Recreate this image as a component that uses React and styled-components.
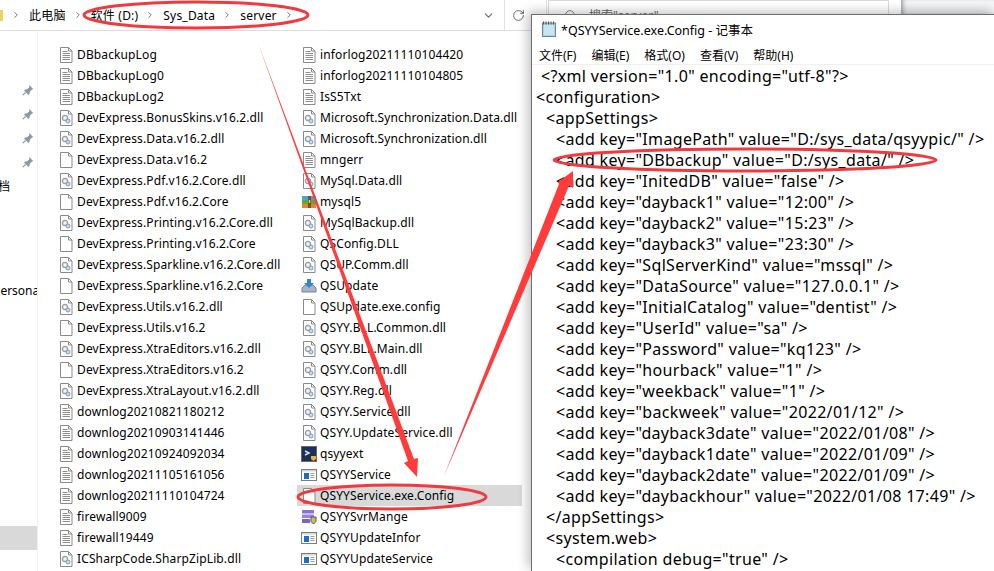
import React from "react";
import styled, { createGlobalStyle } from "styled-components";
import { ChevronRight, ChevronDown, RotateCw, Search } from "lucide-react";

const UI_FONT = `"Noto Sans", "Noto Sans CJK SC", sans-serif`;

const column1 = [
  ["DBbackupLog", "txt"],
  ["DBbackupLog0", "txt"],
  ["DBbackupLog2", "txt"],
  ["DevExpress.BonusSkins.v16.2.dll", "dll"],
  ["DevExpress.Data.v16.2.dll", "dll"],
  ["DevExpress.Data.v16.2", "blank"],
  ["DevExpress.Pdf.v16.2.Core.dll", "dll"],
  ["DevExpress.Pdf.v16.2.Core", "blank"],
  ["DevExpress.Printing.v16.2.Core.dll", "dll"],
  ["DevExpress.Printing.v16.2.Core", "blank"],
  ["DevExpress.Sparkline.v16.2.Core.dll", "dll"],
  ["DevExpress.Sparkline.v16.2.Core", "blank"],
  ["DevExpress.Utils.v16.2.dll", "dll"],
  ["DevExpress.Utils.v16.2", "blank"],
  ["DevExpress.XtraEditors.v16.2.dll", "dll"],
  ["DevExpress.XtraEditors.v16.2", "blank"],
  ["DevExpress.XtraLayout.v16.2.dll", "dll"],
  ["downlog20210821180212", "txt"],
  ["downlog20210903141446", "txt"],
  ["downlog20210924092034", "txt"],
  ["downlog20211105161056", "txt"],
  ["downlog20211110104724", "txt"],
  ["firewall9009", "txt"],
  ["firewall19449", "txt"],
  ["ICSharpCode.SharpZipLib.dll", "dll"],
];

const column2 = [
  ["inforlog20211110104420", "txt"],
  ["inforlog20211110104805", "txt"],
  ["IsS5Txt", "txt"],
  ["Microsoft.Synchronization.Data.dll", "dll"],
  ["Microsoft.Synchronization.dll", "dll"],
  ["mngerr", "txt"],
  ["MySql.Data.dll", "dll"],
  ["mysql5", "rar"],
  ["MySqlBackup.dll", "dll"],
  ["QSConfig.DLL", "dll"],
  ["QSUP.Comm.dll", "dll"],
  ["QSUpdate", "setup"],
  ["QSUpdate.exe.config", "blank"],
  ["QSYY.BLL.Common.dll", "dll"],
  ["QSYY.BLL.Main.dll", "dll"],
  ["QSYY.Comm.dll", "dll"],
  ["QSYY.Reg.dll", "dll"],
  ["QSYY.Service.dll", "dll"],
  ["QSYY.UpdateService.dll", "dll"],
  ["qsyyext", "ext"],
  ["QSYYService", "exe"],
  ["QSYYService.exe.Config", "blank", true],
  ["QSYYSvrMange", "mange"],
  ["QSYYUpdateInfor", "exe"],
  ["QSYYUpdateService", "exe"],
];

// indent is the left padding of the line in the notepad, it is not regular in the file
const configLines = [
  [9, `<?xml version="1.0" encoding="utf-8"?>`],
  [4, `<configuration>`],
  [14, `<appSettings>`],
  [24, `<add key="ImagePath" value="D:/sys_data/qsyypic/" />`],
  [24, `<add key="DBbackup" value="D:/sys_data/" />`],
  [24, `<add key="InitedDB" value="false" />`],
  [24, `<add key="dayback1" value="12:00" />`],
  [24, `<add key="dayback2" value="15:23" />`],
  [24, `<add key="dayback3" value="23:30" />`],
  [24, `<add key="SqlServerKind" value="mssql" />`],
  [24, `<add key="DataSource" value="127.0.0.1" />`],
  [24, `<add key="InitialCatalog" value="dentist" />`],
  [24, `<add key="UserId" value="sa" />`],
  [24, `<add key="Password" value="kq123" />`],
  [24, `<add key="hourback" value="1" />`],
  [24, `<add key="weekback" value="1" />`],
  [24, `<add key="backweek" value="2022/01/12" />`],
  [24, `<add key="dayback3date" value="2022/01/08" />`],
  [24, `<add key="dayback1date" value="2022/01/09" />`],
  [24, `<add key="dayback2date" value="2022/01/09" />`],
  [24, `<add key="daybackhour" value="2022/01/08 17:49" />`],
  [14, `</appSettings>`],
  [14, `<system.web>`],
  [24, `<compilation debug="true" />`],
];

const GlobalStyle = createGlobalStyle`
  html, body {
    margin: 0;
    padding: 0;
    background: #fff;
  }
`;

const Screen = styled.div`
  position: relative;
  display: flex;
  width: 994px;
  height: 571px;
  overflow: hidden;
  font-family: ${UI_FONT};
  color: #000;
  background: #fff;
`;

const Explorer = styled.div`
  flex: 0 0 901px;
  display: flex;
  flex-direction: column;
  background: #fff;
`;

const BackWindow = styled.div`
  flex: 1;
  height: 14px;
  background: linear-gradient(#f7f8f9, #e8eaec);
  box-shadow: inset 4px 0 4px -2px rgba(0, 0, 0, 0.35);
`;

const AddressBar = styled.div`
  flex: 0 0 31px;
  display: flex;
  align-items: flex-start;
  box-sizing: border-box;
  background: #fff;
  border-bottom: 1px solid #dcdcdc;
`;

const Crumbs = styled.div`
  flex: 0 0 505px;
  height: 30px;
  box-sizing: border-box;
  display: flex;
  align-items: center;
  border-right: 1px solid #e2e2e2;
  font-size: 12px;
`;

const FolderSliver = styled.span`
  width: 3px;
  height: 11px;
  background: #f2cf6b;
  margin-right: 8px;
`;

const Crumb = styled.span`
  margin: 0 7px 0 8px;
  white-space: nowrap;
  letter-spacing: 0.2px;
`;

const CrumbArrow = styled(ChevronRight)`
  width: 10px;
  height: 10px;
  color: #777;
  stroke-width: 2.4;
  flex: none;
`;

const DropArrow = styled(ChevronDown)`
  width: 13px;
  height: 13px;
  color: #666;
  margin-left: auto;
  margin-right: 9px;
  stroke-width: 2;
`;

const RefreshCell = styled.div`
  flex: 0 0 42px;
  height: 30px;
  display: flex;
  align-items: center;
  padding-left: 7px;
  box-sizing: border-box;
  border-right: 1px solid #e2e2e2;
  color: #666;
`;

const SearchBox = styled.div`
  flex: 0 0 341px;
  height: 30px;
  box-sizing: border-box;
  margin-left: 1px;
  display: flex;
  align-items: center;
  gap: 12px;
  padding-left: 15px;
  overflow: hidden;
  border: 1px solid #d9d9d9;
  font-size: 12px;
  color: #666;
`;

const Body = styled.div`
  flex: 1;
  display: flex;
  min-height: 0;
`;

const NavPane = styled.div`
  flex: 0 0 38px;
  box-sizing: border-box;
  padding-top: 47px;
  overflow: hidden;
  border-right: 1px solid #efefef;
  font-size: 12px;
`;

const NavRow = styled.div`
  height: 24px;
  display: flex;
  align-items: center;
  justify-content: ${(p) => (p.$pin ? "flex-end" : "flex-start")};
  padding-right: ${(p) => (p.$pin ? "3px" : "0")};
  margin-top: ${(p) => p.$gap || 0}px;
  background: ${(p) => (p.$selected ? "#d9d9d9" : "transparent")};
  white-space: nowrap;
  overflow: hidden;
`;

const NavText = styled.span`
  margin-left: ${(p) => p.$shift || 0}px;
`;

const FileGrid = styled.div`
  flex: 1;
  display: grid;
  grid-auto-flow: column;
  grid-template-rows: repeat(25, 21px);
  grid-template-columns: 243px 225px;
  justify-content: start;
  align-content: start;
  padding: 13px 0 0 16px;
`;

const FileRow = styled.div`
  display: flex;
  align-items: center;
  gap: 3px;
  font-size: 12px;
  line-height: 21px;
  letter-spacing: 0.12px;
  white-space: nowrap;
  background: ${(p) => (p.$selected ? "#d9d9d9" : "transparent")};
`;

const IconSlot = styled.svg`
  flex: none;
  width: 16px;
  height: 16px;
  margin-left: 4px;
`;

const Notepad = styled.div`
  position: absolute;
  left: 531px;
  top: 14px;
  right: 0;
  bottom: 0;
  display: flex;
  flex-direction: column;
  background: #fff;
  border-left: 1px solid #6d6d6d;
  border-top: 1px solid #6d6d6d;
  box-shadow: -4px -3px 10px rgba(0, 0, 0, 0.22);
`;

const TitleBar = styled.div`
  flex: 0 0 30px;
  display: flex;
  align-items: center;
  gap: 4px;
  padding: 0 0 2px 9px;
  box-sizing: border-box;
  font-size: 12.5px;
`;

const MenuBar = styled.div`
  flex: 0 0 19px;
  display: flex;
  align-items: center;
  gap: 15px;
  padding-left: 7px;
  font-size: 12px;
  border-bottom: 1px solid #f0f0f0;
`;

const TextArea = styled.div`
  flex: 1;
  padding-top: 1px;
  font-size: 16px;
  letter-spacing: 0.33px;
`;

const ConfigLine = styled.div`
  height: 21px;
  line-height: 21px;
  white-space: pre;
  padding-left: ${(p) => p.$indent}px;
`;

const Overlay = styled.svg`
  position: absolute;
  left: 0;
  top: 0;
  width: 994px;
  height: 571px;
  pointer-events: none;
`;

const DocOutline = () => (
  <path d="M2.5 .5h8l3.5 3.5v11.5h-11.5z M10.5 .5v3.5h3.5" fill="#fff" stroke="#8a8a8a" />
);

const FileIcon = ({ kind }) => {
  if (kind === "txt") {
    return (
      <IconSlot viewBox="0 0 16 16">
        <DocOutline />
        <path d="M4.5 4.5h5 M4.5 6.5h7.5 M4.5 8.5h7.5 M4.5 10.5h7.5 M4.5 12.5h7.5" stroke="#8d8d8d" />
      </IconSlot>
    );
  }
  if (kind === "dll") {
    return (
      <IconSlot viewBox="0 0 16 16">
        <DocOutline />
        <circle cx="7" cy="8" r="2.8" fill="#d4d8dc" stroke="#8f9499" />
        <circle cx="7" cy="8" r="1" fill="#fff" />
        <circle cx="10" cy="11" r="2" fill="#c3dcf0" stroke="#7d9db8" />
      </IconSlot>
    );
  }
  if (kind === "exe") {
    return (
      <IconSlot viewBox="0 0 16 16">
        <rect x=".5" y="2.5" width="15" height="11" fill="#fff" stroke="#7c7c7c" />
        <rect x="1" y="3" width="14" height="1.5" fill="#cfd6de" />
        <rect x="3" y="6" width="5" height="6" fill="#1a6fc4" />
        <path d="M9.5 6.5h4 M9.5 8.5h4 M9.5 10.5h4" stroke="#9a9a9a" />
      </IconSlot>
    );
  }
  if (kind === "rar") {
    return (
      <IconSlot viewBox="0 0 16 16">
        <rect x="1" y="2" width="14" height="4" fill="#4f9fd8" />
        <rect x="1" y="6" width="14" height="4" fill="#5da83f" />
        <rect x="1" y="10" width="14" height="4" fill="#e0862d" />
        <rect x="7" y="2" width="3" height="12" fill="#7a4f25" />
        <rect x="7.8" y="6" width="1.4" height="3" fill="#f0d080" />
      </IconSlot>
    );
  }
  if (kind === "setup") {
    return (
      <IconSlot viewBox="0 0 16 16">
        <path d="M1 10l3-3h8l3 3v4H1z" fill="#a9b4c4" stroke="#77859a" />
        <path d="M6 1h4v4h3l-5 5-5-5h3z" fill="#2f86d6" />
      </IconSlot>
    );
  }
  if (kind === "ext") {
    return (
      <IconSlot viewBox="0 0 16 16">
        <rect x=".5" y=".5" width="15" height="15" fill="#1d2f5c" stroke="#6a6a6a" />
        <path d="M4 5l4 2-4 2" fill="none" stroke="#d9e4f2" strokeWidth="1.5" />
        <path d="M10 10h5v3l-2.5 2-2.5-2z" fill="#f0b429" />
      </IconSlot>
    );
  }
  if (kind === "mange") {
    return (
      <IconSlot viewBox="0 0 16 16">
        <rect x="1" y="1" width="12" height="3.5" rx=".5" fill="#8c6fd8" />
        <rect x="1" y="5.5" width="12" height="3.5" rx=".5" fill="#9a82e0" />
        <rect x="1" y="10" width="8" height="4" rx=".5" fill="#7d63c8" />
        <path d="M10 8h5v4.5l-2.5 2.5-2.5-2.5z" fill="#f0b429" stroke="#1f5fb4" />
      </IconSlot>
    );
  }
  return (
    <IconSlot viewBox="0 0 16 16">
      <DocOutline />
    </IconSlot>
  );
};

const PinIcon = () => (
  <svg width="12" height="12" viewBox="0 0 12 12">
    <path d="M7 .8l4.2 4.2-1.2.6-2.2 2.2-.3 2.2-1.100 1-4.400-4.400 1-1.100 2.200-.3 2.200-2.200z" fill="#8c98a3" />
    <path d="M3.5 8.500L.8 11.200" stroke="#8c98a3" strokeWidth="1.200" />
  </svg>
);

const NotepadIcon = () => (
  <svg width="16" height="16" viewBox="0 0 16 16">
    <rect x="1.5" y="2" width="13" height="13.5" fill="#a8d4e6" stroke="#6f8794" />
    <rect x="3" y="4" width="10" height="10" fill="#c9e6f0" />
    <path d="M2.5 .5v3 M5 .5v3 M7.5 .5v3 M10 .5v3 M12.5 .5v3" stroke="#555" />
  </svg>
);

const App = () => (
  <Screen>
    <GlobalStyle />
    <Explorer>
      <AddressBar>
        <Crumbs>
          <FolderSliver />
          <CrumbArrow />
          <Crumb>此电脑</Crumb>
          <CrumbArrow />
          <Crumb>软件 (D:)</Crumb>
          <CrumbArrow />
          <Crumb>Sys_Data</Crumb>
          <CrumbArrow />
          <Crumb>server</Crumb>
          <CrumbArrow />
          <DropArrow />
        </Crumbs>
        <RefreshCell>
          <RotateCw size={13} strokeWidth={1.8} />
        </RefreshCell>
        <SearchBox>
          <Search size={13} strokeWidth={1.5} />
          <span>搜索"server"</span>
        </SearchBox>
      </AddressBar>
      <Body>
        <NavPane>
          <NavRow $pin><PinIcon /></NavRow>
          <NavRow $pin><PinIcon /></NavRow>
          <NavRow $pin><PinIcon /></NavRow>
          <NavRow $pin><PinIcon /></NavRow>
          <NavRow><NavText $shift={-2}>档</NavText></NavRow>
          <NavRow $gap={80}><NavText $shift={-7}>personal</NavText></NavRow>
          <NavRow $gap={224} $selected />
        </NavPane>
        <FileGrid>
          {column1.map(([name, kind]) => (
            <FileRow key={name}>
              <FileIcon kind={kind} />
              {name}
            </FileRow>
          ))}
          {column2.map(([name, kind, selected]) => (
            <FileRow key={name} $selected={selected}>
              <FileIcon kind={kind} />
              {name}
            </FileRow>
          ))}
        </FileGrid>
      </Body>
    </Explorer>
    <BackWindow />
    <Notepad>
      <TitleBar>
        <NotepadIcon />
        *QSYYService.exe.Config - 记事本
      </TitleBar>
      <MenuBar>
        <span>文件(F)</span>
        <span>编辑(E)</span>
        <span>格式(O)</span>
        <span>查看(V)</span>
        <span>帮助(H)</span>
      </MenuBar>
      <TextArea>
        {configLines.map(([indent, text]) => (
          <ConfigLine key={text} $indent={indent}>{text}</ConfigLine>
        ))}
      </TextArea>
    </Notepad>
    <Overlay viewBox="0 0 994 571">
      <g fill="none" stroke="#f03a3f" strokeWidth="3">
        <ellipse cx="196" cy="15" rx="112" ry="13" />
        <ellipse cx="745" cy="160" rx="191" ry="11" />
        <ellipse cx="392" cy="497" rx="94" ry="12" />
      </g>
      <g fill="#ff3b3b">
        <path d="M258 43L408 461 404 463 417 477 418 458 414 459z" />
        <path d="M444 476L559 184 558 182 573 171 573 188 569 186z" />
      </g>
    </Overlay>
  </Screen>
);

export default App;
